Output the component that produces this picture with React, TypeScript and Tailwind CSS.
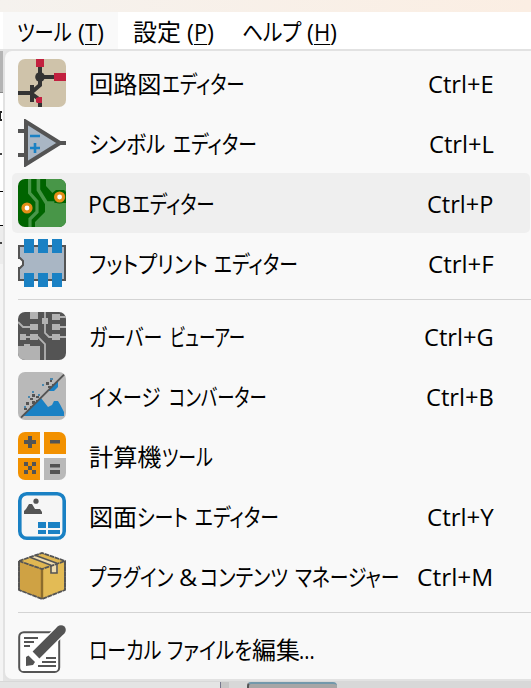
import * as React from "react"
import clsx from "clsx"

// [text, left edge, right edge], edges are measured from the start of the label
type Run = [string, number, number]

interface MenuEntry {
    id: string
    icon: React.ReactNode
    label: Run[]
    shortcut?: Run
    active?: boolean
}

// Squeezes a piece of text into the given width
function FitText({ text, width, underline }: { text: string; width: number; underline?: boolean }) {
    const ref = React.useRef<HTMLSpanElement>(null)
    const [scale, setScale] = React.useState(1)

    React.useLayoutEffect(() => {
        const natural = ref.current?.offsetWidth
        if (natural) setScale(width / natural)
    }, [text, width])

    return (
        <span className="inline-block shrink-0 whitespace-nowrap" style={{ width }}>
            <span
                ref={ref}
                className={clsx("inline-block origin-left", underline && "underline decoration-1 underline-offset-[3px]")}
                style={{ transform: `scaleX(${scale})` }}
            >
                {text}
            </span>
        </span>
    )
}

function Label({ runs }: { runs: Run[] }) {
    return (
        <span className="flex">
            {runs.map(([text, start, end], i) => (
                <span key={i} className="flex" style={{ marginLeft: start - (i > 0 ? runs[i - 1][2] : 0) }}>
                    <FitText text={text} width={end - start} />
                </span>
            ))}
        </span>
    )
}

function Icon({ children }: { children: React.ReactNode }) {
    return (
        <svg viewBox="0 0 24 24" className="size-12 shrink-0" fill="none">
            {children}
        </svg>
    )
}

const schematicIcon = (
    <Icon>
        <clipPath id="sch"><rect width="24" height="24" rx="3.5" /></clipPath>
        <g clipPath="url(#sch)">
            <rect width="24" height="24" fill="#cfc3aa" />
            <path d="M11 4v9L7 16.500M7 17.500l4 3v4M0 17h7M11 9h8" stroke="#333" strokeWidth="2" />
            <path d="M7 13v8.500" stroke="#333" strokeWidth="2" />
            <circle cx="11" cy="9" r="2.4" fill="#333" />
            <path d="M9 0h4v4H9zM18 7h6v4h-6zM9 19.500l1.500-.5H12v3H9.500L9 21.500z" fill="#c2203f" />
        </g>
    </Icon>
)

const symbolIcon = (
    <Icon>
        <path d="M0 6h4M0 18h4M20 12h4" stroke="#545454" strokeWidth="2" />
        <path d="M4 1.400v21.200L21 12z" fill="#a9b6c4" stroke="#545454" strokeWidth="2" />
        <path d="M6 8.500h5M6 14.500h5M8.500 12v5" stroke="#1a81c4" strokeWidth="1.300" />
    </Icon>
)

const pcbIcon = (
    <Icon>
        <clipPath id="pcb"><rect width="24" height="24" rx="3.500" /></clipPath>
        <g clipPath="url(#pcb)">
            <rect width="24" height="24" fill="#006400" />
            <path d="M14 0v3.500L17.200 7 19 5.500h4l1 1V0z" fill="#489648" />
            <path d="M24 12v12H8.500v-2.500l5-5V12z" fill="#489648" />
            <path d="M5.800 0v7l3.700 4.200v5.300L6 20v4" stroke="#489648" strokeWidth="1.600" />
            <path d="M10.200 0v5.500l4 6.500h4" stroke="#489648" strokeWidth="1.800" />
            <circle cx="20.800" cy="9" r="3.300" fill="#006400" />
            <circle cx="20.800" cy="9" r="2" fill="#fff" stroke="#e38e18" strokeWidth="1.600" />
            <circle cx="4.500" cy="14.500" r="2" fill="#fff" stroke="#e38e18" strokeWidth="1.600" />
        </g>
    </Icon>
)

const footprintIcon = (
    <Icon>
        <path d="M.5 3.500h23v17H.5v-6h.5l1.500-1.500v-2L1 9.500H.5z" fill="#a9b6c4" stroke="#545454" />
        <path d="M3 0h5v7H3zM10 0h5v7h-5zM17 0h5v7h-5zM3 17h5v7H3zM10 17h5v7h-5zM17 17h5v7h-5z" fill="#1a81c4" />
    </Icon>
)

const gerberIcon = (
    <Icon>
        <clipPath id="gbr"><rect width="24" height="24" rx="3.500" /></clipPath>
        <g clipPath="url(#gbr)">
            <rect width="24" height="24" fill="#545454" />
            <path d="M6 0h4v3.500H6zM6 6h4v3H6zM6 11h4v3H6zM17 1h4v3h-4zM17 6h4v3h-4zM17 11h4v3h-4zM12 3h3v3h-3zM1 11h3v3H1z" fill="#b2b2b2" />
            <path d="M0 5l2.500 2.500H6M2 12.500h8l3.500 3.500v8M13.500 0v10.500l2 2H17M21 2.500h3M21 7.500h3M21 12.500h3" stroke="#b2b2b2" strokeWidth=".9" />
            <path d="M0 17h3v-1h3v1h5v7H0z" fill="#b2b2b2" />
        </g>
    </Icon>
)

const imageIcon = (
    <Icon>
        <rect width="24" height="24" rx="3.500" fill="#b9b9b9" />
        <path d="M2 22l9.500-9 3.500 4.500 2-1 1-2h2l1.200 2L23 20v2z" fill="#1a81c4" />
        <path d="M15 9.500L20 4.500v3l-2 2z" fill="#1a81c4" />
        <path d="M1.500 22.800L23 1.300" stroke="#545454" />
        <path d="M14 5h1.500v1.500H14zM16 4h1v1h-1zM17 6h1v1h-1zM7 11h1.500v1.500H7zM6 13h1.500v1H6zM9 12h1.500v1H9zM7 14.500h1.500V16H7zM4 15h1.500v1.500H4zM6 17h1v1H6zM3 18h1.500v1H3zM15 7h1.500v1H15zM9 14h1v1H9z" fill="#545454" />
        <path d="M16 3h1.500v1H16zM12 6h1v1h-1zM7 9.500h1v1H7zM5 12h1v1H5zM3 17h1v1H3zM10 11h1v1h-1z" fill="#4b87ad" />
    </Icon>
)

const calculatorIcon = (
    <Icon>
        <clipPath id="calc"><rect width="24" height="24" rx="3.500" /></clipPath>
        <g clipPath="url(#calc)">
            <path d="M0 0h11v11H0zM13 0h11v11H13zM0 13h11v11H0z" fill="#f29100" />
            <path d="M13 13h11v11H13z" fill="#b9b9b9" />
            <path d="M5 2h2v2h2v2H7v2H5V6H3V4h2zM16 4h5v1.800h-5zM16 16h5v1.800h-5zM16 19h5v2h-5z" fill="#545454" />
            <path d="M3 15h2v2H3zM7 15h2v2H7zM5 17h2v2H5zM3 19h2v2H3zM7 19h2v2H7z" fill="#545454" />
        </g>
    </Icon>
)

const sheetIcon = (
    <Icon>
        <rect x=".9" y=".9" width="22.200" height="22.200" rx="3.500" fill="#f6f6f6" stroke="#1a81c4" strokeWidth="1.800" />
        <path d="M3 11V9.500l1-1L5.500 6H7l1.500 2.500H11l1 1.500v1z" fill="#545454" />
        <circle cx="9" cy="4.600" r="1.300" fill="#545454" />
        <path d="M10 15h4v3h-4zM15 15h6v3h-6zM10 19h4v2h-4zM15 19h6v2h-6z" fill="#1a81c4" />
    </Icon>
)

const packageIcon = (
    <Icon>
        <path d="M.5 4.500L12 .5l11.500 4L12 8.500z" fill="#e0b752" />
        <path d="M.5 4.500l11.500 4v15L.5 19z" fill="#cfa244" />
        <path d="M23.500 4.500L12 8.500v15L23.500 19z" fill="#e3bb55" />
        <path d="M12 8.500v15" stroke="#8c6c2c" strokeWidth="1.200" />
        <path d="M6 2.600l2.500-1L20 5.500v4.500l-3.500.8V7z" fill="#efdcae" />
        <path d="M.5 4.500L12 .5l11.500 4V19L12 23.500.5 19zM.5 4.500l11.500 4 11.500-4" stroke="#545454" strokeWidth=".9" strokeDasharray="2.400 .3" />
        <path d="M6 2.600l10.500 4M8.500 1.600l11 4M16.500 7v3.500h3V6M.5 4.500V19M23.500 4.500V19" stroke="#545454" strokeWidth=".8" />
    </Icon>
)

const editIcon = (
    <Icon>
        <rect x=".6" y="3.600" width="20" height="19.900" rx="2.300" fill="#fff" stroke="#545454" />
        <path d="M3 6.500h7M3 8.500h5M3 10.500h3M14 16.500h5M12 18.500h7M10 20.500h9" stroke="#545454" />
        <path d="M21.500 2.500L8.500 15.500" stroke="#fff" strokeWidth="6" />
        <path d="M21.300 2.700L9 15" stroke="#545454" strokeWidth="4.800" />
        <circle cx="21.500" cy="2.500" r="2.400" fill="#545454" />
        <path d="M4 20.500V16l1.200-.8L8.500 18.500 7.500 20z" fill="#545454" />
    </Icon>
)

const groups: MenuEntry[][] = [
    [
        { id: "schematic", icon: schematicIcon, label: [["回路図", 0, 73], ["エディター", 73, 156]], shortcut: ["Ctrl+E", 0, 65.5] },
        { id: "symbol", icon: symbolIcon, label: [["シンボル", 0, 76], ["エディター", 84, 168]], shortcut: ["Ctrl+L", 0, 64.5] },
        { id: "pcb", icon: pcbIcon, label: [["PCB", -1, 42], ["エディター", 43, 126]], shortcut: ["Ctrl+P", 0, 66], active: true },
        { id: "footprint", icon: footprintIcon, label: [["フットプリント", 0, 119], ["エディター", 125, 209]], shortcut: ["Ctrl+F", 0, 65.5] },
    ],
    [
        { id: "gerber", icon: gerberIcon, label: [["ガーバー", -0.5, 73], ["ビューアー", 81, 156]], shortcut: ["Ctrl+G", 0, 69.5] },
        { id: "image", icon: imageIcon, label: [["イメージ", -0.5, 71], ["コンバーター", 79.5, 177]], shortcut: ["Ctrl+B", 0, 67.5] },
        { id: "calculator", icon: calculatorIcon, label: [["計算機", 0, 73], ["ツール", 73, 124]] },
        { id: "sheet", icon: sheetIcon, label: [["図面", 0, 48], ["シート", 48, 99], ["エディター", 106, 190]], shortcut: ["Ctrl+Y", 0, 66.5] },
        { id: "plugins", icon: packageIcon, label: [["プラグイン", -0.5, 84], ["&", 90, 108], ["コンテンツ", 111, 199], ["マネージャー", 206, 310]], shortcut: ["Ctrl+M", 0, 76] },
    ],
    [
        { id: "local", icon: editIcon, label: [["ローカル", -0.5, 72], ["ファイルを", 78, 163], ["編集", 163, 211], ["...", 210, 226]] },
    ],
]

function MenuRow({ entry }: { entry: MenuEntry }) {
    return (
        <div
            className={clsx(
                "flex h-[60px] items-center rounded-[5px] pl-1.5 pr-[37px]",
                entry.active && "bg-[#efefef]"
            )}
        >
            {entry.icon}
            <div className="ml-[23px] flex-1 pt-0.5">
                <Label runs={entry.label} />
            </div>
            {entry.shortcut && (
                <div className="pt-0.5">
                    <Label runs={[entry.shortcut]} />
                </div>
            )}
        </div>
    )
}

function MenuBarItem({ label, width, hotkey, hotkeyWidth }: { label: string; width: number; hotkey: string; hotkeyWidth: number }) {
    return (
        <span className="flex gap-1.5">
            <FitText text={label} width={width} />
            <span className="flex">
                <FitText text="(" width={7} />
                <FitText text={hotkey} width={hotkeyWidth} underline />
                <FitText text=")" width={7} />
            </span>
        </span>
    )
}

export default function App() {
    return (
        <div className="flex h-[688px] w-[531px] flex-col overflow-hidden bg-[#e4e4e4] font-['Open_Sans','Noto_Sans_CJK_JP',sans-serif] text-[23.5px] font-normal leading-8 text-black [font-feature-settings:'palt']">
            <div className="h-3 shrink-0 bg-linear-to-r from-[#f5f2ee] to-[#fbeee3]" />
            <div className="flex h-[37px] shrink-0 bg-white pl-[3px]">
                <div className="flex w-[115px] items-center bg-[#f9f9f9] pl-3.5 pt-0.5">
                    <MenuBarItem label="ツール" width={55} hotkey="T" hotkeyWidth={12} />
                </div>
                <div className="flex w-[109px] items-center pl-[15px] pt-0.5">
                    <MenuBarItem label="設定" width={48} hotkey="P" hotkeyWidth={13} />
                </div>
                <div className="flex items-center pl-[15px] pt-0.5">
                    <MenuBarItem label="ヘルプ" width={59} hotkey="H" hotkeyWidth={16} />
                </div>
            </div>
            <div className="flex h-[632px] shrink-0">
                {/* sliver of the window behind the menu */}
                <div className="flex w-[3px] shrink-0 flex-col">
                    <div className="mt-0.5 h-[42px] shrink-0 border-b border-[#888] bg-[#b4b4b4]" />
                    <div className="flex h-[99px] shrink-0 flex-col border-b border-black bg-white">
                        <div className="mt-[18px] h-2.5 w-0.5 border-y-2 border-l border-[#222]" />
                        <div className="mt-[32px] h-0.5 w-0.5 bg-[#444]" />
                    </div>
                    <div className="h-[34px] shrink-0 border-b border-black bg-white" />
                    <div className="h-[38px] shrink-0 bg-[#ececec] pt-4">
                        <div className="h-0.5 w-0.5 bg-[#444]" />
                    </div>
                    <div className="flex-1 bg-[#f4f4f4]" />
                </div>
                <div className="flex w-[528px] flex-col rounded-l-[9px] border-y-2 border-l-2 border-[#e2e2e2] bg-[#f9f9f9] pl-[7px] pt-0.5">
                    {groups.map((group, i) => (
                        <div
                            key={i}
                            className={clsx(i > 0 && "mt-1.5", i === 1 && "mb-px", i === 2 && "mt-[5px]")}
                        >
                            {i > 0 && <div className="mb-1.5 ml-1.5 h-px bg-[#d4d4d4]" />}
                            {group.map((entry) => (
                                <div key={entry.id} className="pr-px">
                                    <MenuRow entry={entry} />
                                </div>
                            ))}
                        </div>
                    ))}
                </div>
            </div>
            <div className="flex h-[7px] shrink-0 bg-[#d8d8d8] pt-px">
                <div className="w-[221px] border-r border-[#77778c] bg-[#e4e4e4]" />
                <div className="w-2 bg-[#c6c6c6]" />
                <div className="ml-[18px] w-[90px] rounded-t-sm border-l-2 border-t-2 border-l-[#555] border-t-[#7298ab] bg-[#a6a6a6]" />
            </div>
        </div>
    )
}
